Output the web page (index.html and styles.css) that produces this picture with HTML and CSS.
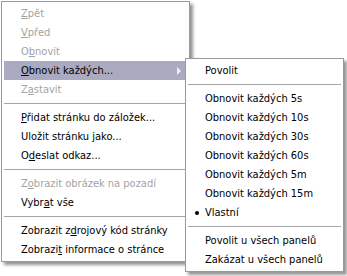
FILE: index.html
```html
<!DOCTYPE html>
<html lang="cs">
<head>
<meta charset="utf-8">
<title>Menu</title>
<link rel="stylesheet" href="styles.css">
</head>
<body>
<div class="stage">
  <div class="menu main">
    <div class="item disabled"><u>Z</u>pět</div>
    <div class="item disabled"><u>V</u>před</div>
    <div class="item disabled">O<u>b</u>novit</div>
    <div class="item active"><u>O</u>bnovit každých...<span class="arrow"></span></div>
    <div class="item disabled">Z<u>a</u>stavit</div>
    <div class="sep"></div>
    <div class="item"><u>P</u>řidat stránku do záložek...</div>
    <div class="item">Uložit stránku <u>j</u>ako...</div>
    <div class="item">O<u>d</u>eslat odkaz...</div>
    <div class="sep"></div>
    <div class="item disabled">Z<u>o</u>brazit obrázek na pozadí</div>
    <div class="item">Vybr<u>a</u>t vše</div>
    <div class="sep"></div>
    <div class="item">Zobrazit z<u>d</u>rojový kód stránky</div>
    <div class="item">Zobrazi<u>t</u> informace o stránce</div>
  </div>
  <div class="menu sub">
    <div class="item">Povolit</div>
    <div class="sep"></div>
    <div class="item">Obnovit každých 5s</div>
    <div class="item">Obnovit každých 10s</div>
    <div class="item">Obnovit každých 30s</div>
    <div class="item">Obnovit každých 60s</div>
    <div class="item">Obnovit každých 5m</div>
    <div class="item">Obnovit každých 15m</div>
    <div class="item checked"><span class="dot"></span>Vlastní</div>
    <div class="sep"></div>
    <div class="item">Povolit u všech panelů</div>
    <div class="item">Zakázat u všech panelů</div>
  </div>
</div>
</body>
</html>
```
FILE: styles.css
```css
html, body {
  margin: 0;
  padding: 0;
  background: #ffffff;
}

.stage {
  position: relative;
  width: 347px;
  height: 276px;
  overflow: hidden;
  padding: 1px 0 0 1px;
  box-sizing: border-box;
  font-family: "DejaVu Sans Condensed", "Liberation Sans", sans-serif;
  font-size: 11px;
  color: #000000;
}

.menu {
  background: #ffffff;
  border: 1px solid #9a9a9a;
  padding: 2px;
  box-shadow: 3px 3px 3px rgba(0, 0, 0, 0.42);
}

.main {
  width: 183px;
}

.sub {
  position: absolute;
  left: 185px;
  top: 58px;
  width: 153px;
}

.item {
  position: relative;
  height: 19px;
  line-height: 19px;
  padding-left: 17px;
  white-space: nowrap;
}

.item u {
  text-decoration: underline;
  text-underline-offset: 1px;
}

.disabled {
  color: #a3a3a3;
}

.active {
  background: #aaabc0;
}

.arrow {
  position: absolute;
  right: 6px;
  top: 6px;
  width: 0;
  height: 0;
  border-top: 4px solid transparent;
  border-bottom: 4px solid transparent;
  border-left: 4px solid #eeeef4;
}

.sep {
  height: 9px;
  display: flex;
  align-items: center;
}

.sep::before {
  content: "";
  flex: 1;
  height: 1px;
  background: #a6a6a6;
}

.dot {
  position: absolute;
  left: 7px;
  top: 8px;
  width: 4px;
  height: 4px;
  border-radius: 50%;
  background: #000000;
}
```
